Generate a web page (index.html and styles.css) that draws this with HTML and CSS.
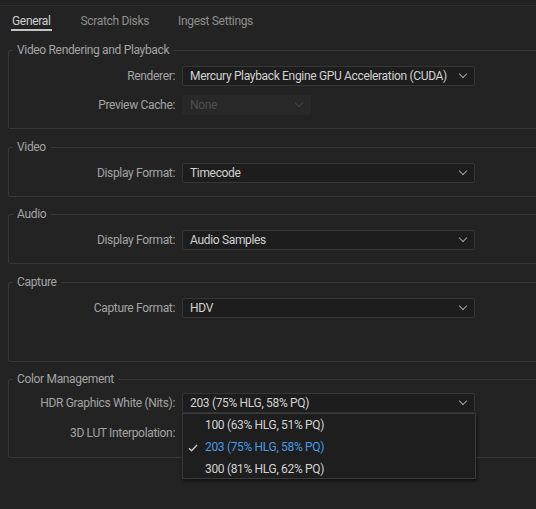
FILE: index.html
```html
<!DOCTYPE html>
<html lang="en">
<head>
    <meta charset="UTF-8">
    <title>Preferences. General</title>
    <link rel="stylesheet" href="styles.css">
</head>
<body>
<div class="prefs">
    <div class="tabs">
        <span class="tab tab--active">General</span>
        <span class="tab">Scratch Disks</span>
        <span class="tab">Ingest Settings</span>
    </div>

    <div class="group">
        <span class="group__title">Video Rendering and Playback</span>
        <div class="row">
            <span class="row__label">Renderer:</span>
            <span class="select">Mercury Playback Engine GPU Acceleration (CUDA)</span>
        </div>
        <div class="row">
            <span class="row__label">Preview Cache:</span>
            <span class="select select--disabled">None</span>
        </div>
    </div>

    <div class="group">
        <span class="group__title">Video</span>
        <div class="row">
            <span class="row__label">Display Format:</span>
            <span class="select">Timecode</span>
        </div>
    </div>

    <div class="group">
        <span class="group__title">Audio</span>
        <div class="row">
            <span class="row__label">Display Format:</span>
            <span class="select">Audio Samples</span>
        </div>
    </div>

    <div class="group group--tall">
        <span class="group__title">Capture</span>
        <div class="row">
            <span class="row__label">Capture Format:</span>
            <span class="select">HDV</span>
        </div>
    </div>

    <div class="group group--color">
        <span class="group__title">Color Management</span>
        <div class="row">
            <span class="row__label">HDR Graphics White (Nits):</span>
            <span class="select">203 (75% HLG, 58% PQ)
                <!-- открытый список -->
                <span class="menu">
                    <span class="menu__item">100 (63% HLG, 51% PQ)</span>
                    <span class="menu__item menu__item--checked">
                        <svg class="menu__check" width="10" height="8" viewBox="0 0 10 8"><polyline points="1,4.2 3.6,6.8 9,1" fill="none" stroke="#c8c8c8" stroke-width="1.4"/></svg>
                        203 (75% HLG, 58% PQ)
                    </span>
                    <span class="menu__item">300 (81% HLG, 62% PQ)</span>
                </span>
            </span>
        </div>
        <div class="row">
            <span class="row__label">3D LUT Interpolation:</span>
        </div>
    </div>
</div>
</body>
</html>
```

FILE: styles.css
```css
* {
    margin: 0;
    box-sizing: border-box;
}

body {
    background: #232323;
    font-family: Roboto, sans-serif;
    font-size: 12px;
    letter-spacing: -0.33px;
    overflow: hidden;
}

.prefs {
    --label-color: #a3a3a3;
    --text-color: #d2d2d2;
    --line-color: #383838;
    width: 580px;
    height: 504px;
    border-top: 1px solid #2f2f2f;
    margin-top: 5px;
}

/*tabs*/

.tabs {
    display: flex;
    gap: 29px;
    padding: 7px 0 0 11px;
    height: 44px;
}

.tab {
    color: #8e8e8e;
    line-height: 16px;
    height: 18px;
}

.tab--active {
    color: #d0d0d0;
    border-bottom: 2px solid #c4c4c4;
    padding: 0 1px;
}

/*groups*/

.group {
    position: relative;
    margin: 0 0 17.5px 8px;
    padding: 15px 0 13px 0;
    border: 1px solid var(--line-color);
    border-radius: 2px;
}

.group__title {
    position: absolute;
    left: 4px;
    top: -9px;
    padding: 0 4px;
    color: var(--label-color);
    line-height: 16px;
    background: #232323;
}

.group--tall {
    padding-bottom: 43px;
}

.group--color {
    padding: 13px 0 14px 0;
}

.row {
    display: flex;
    align-items: center;
    gap: 7px;
    height: 20px;
}

.row + .row {
    margin-top: 9px;
}

.group--color .row + .row {
    margin-top: 10px;
}

.row__label {
    width: 166px;
    text-align: right;
    color: var(--label-color);
}

/*select*/

.select {
    position: relative;
    width: 293px;
    height: 20px;
    padding: 0 0 0 7px;
    line-height: 18px;
    color: var(--text-color);
    background: #1d1d1d;
    border: 1px solid #363636;
    border-radius: 2px;
}

.select:after {
    content: "";
    position: absolute;
    right: 8px;
    top: 4px;
    width: 5px;
    height: 5px;
    border-right: 1px solid #a0a0a0;
    border-bottom: 1px solid #a0a0a0;
    transform: rotate(45deg);
}

.select--disabled {
    width: 129px;
    color: #4e4e4e;
    background: #282828;
    border-color: #282828;
}

.select--disabled:after {
    border-color: #444;
}

/*menu*/

.menu {
    position: absolute;
    left: -1px;
    top: 19px;
    width: 294px;
    height: 66px;
    display: flex;
    flex-direction: column;
    background: #1e1e1e;
    border: 1px solid #3a3a3a;
    box-shadow: 1px 2px 3px rgba(0, 0, 0, 0.5);
    z-index: 2;
}

.menu__item {
    position: relative;
    height: 22px;
    line-height: 22px;
    padding-left: 22px;
    color: var(--text-color);
}

.menu__item--checked {
    color: #4a9ae4;
}

.menu__check {
    position: absolute;
    left: 5px;
    top: 8px;
}
```
